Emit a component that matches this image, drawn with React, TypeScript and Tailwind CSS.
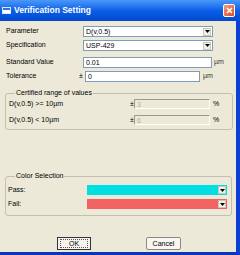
function Arrow() {
  return (
    <div className="w-[8px] h-[8px] mr-[1px] bg-[#f1efe6] border border-[#c9c7ba] flex items-center justify-center">
      <svg width="5" height="3" viewBox="0 0 5 3">
        <path d="M0 0h5L2.5 3z" fill="#000" />
      </svg>
    </div>
  );
}

function Select({ value, w }: { value: string; w: string }) {
  return (
    <div className={`${w} h-[11px] border border-[#7f9db9] bg-white flex items-center`}>
      <span className="pl-[2px] flex-1 leading-none">{value}</span>
      <Arrow />
    </div>
  );
}

function Disabled({ value }: { value: string }) {
  return (
    <div className="w-[76px] h-[10px] border-t border-l border-t-[#9d9b90] border-l-[#9d9b90] border-b border-r border-b-[#fffffb] border-r-[#fffffb] bg-[#ece9d8] flex items-center">
      <span className="pl-[2px] text-[#b5b2a4] leading-none">{value}</span>
    </div>
  );
}

export default function App() {
  return (
    <div className="w-[240px] h-[255px] bg-[#ece9d8] flex flex-col overflow-hidden font-['Liberation_Sans',Arial,sans-serif] text-[7px] text-black">
      {/* Title bar */}
      <div className="h-[21px] shrink-0 flex items-center pl-[2px] pr-[5px] bg-gradient-to-b from-[#4a98f8] via-[#0a5fe8] to-[#0449d0]">
        <div className="w-[9px] h-[7px] bg-white border border-[#dfe8f8] flex flex-col">
          <div className="h-[2px] bg-[#3a6fd8]" />
        </div>
        <span className="ml-[3px] text-white font-bold text-[8.5px] leading-none">Verification Setting</span>
        <div className="ml-auto w-[12px] h-[13px] rounded-[2px] border border-white bg-gradient-to-br from-[#f39a7a] to-[#d8461c] flex items-center justify-center">
          <svg width="7" height="7" viewBox="0 0 7 7">
            <path d="M1 1l5 5M6 1L1 6" stroke="#fff" strokeWidth="1.6" />
          </svg>
        </div>
      </div>

      {/* Body */}
      <div className="flex-1 flex flex-col border-r-[4px] border-r-[#0b3fd6] border-b-[3px] border-b-[#0a36b8]">
        <div className="ml-[6px] mt-[5px] flex items-center h-[11px]">
          <span className="w-[77px]">Parameter</span>
          <Select value="D(v,0.5)" w="w-[130px]" />
        </div>
        <div className="ml-[6px] mt-[3px] flex items-center h-[11px]">
          <span className="w-[77px]">Specification</span>
          <Select value="USP-429" w="w-[130px]" />
        </div>
        <div className="ml-[6px] mt-[6px] flex items-center h-[11px]">
          <span className="w-[77px]">Standard Value</span>
          <div className="w-[129px] h-[11px] border border-[#7f9db9] bg-white flex items-center">
            <span className="pl-[2px] leading-none">0.01</span>
          </div>
          <span className="ml-[2px] text-[#333]">µm</span>
        </div>
        <div className="ml-[6px] mt-[3px] flex items-center h-[11px]">
          <span className="w-[73px]">Tolerance</span>
          <span className="w-[6px]">±</span>
          <div className="w-[115px] h-[11px] border border-[#7f9db9] bg-white flex items-center">
            <span className="pl-[2px] leading-none">0</span>
          </div>
          <span className="ml-[3px] text-[#333]">µm</span>
        </div>

        {/* Certified range */}
        <div className="relative ml-[5px] mt-[11px] w-[228px] h-[37px] border border-[#c3c0b0] rounded-[3px] flex flex-col pl-[3px]">
          <span className="absolute left-[9px] top-[-5px] px-[1px] bg-[#ece9d8] leading-none">Certified range of values</span>
          <div className="mt-[5px] flex items-center h-[10px]">
            <span className="w-[121px]">D(v,0.5) &gt;= 10µm</span>
            <span className="w-[4px]">±</span>
            <Disabled value="3" />
            <span className="ml-[3px]">%</span>
          </div>
          <div className="mt-[6px] flex items-center h-[10px]">
            <span className="w-[121px]">D(v,0.5) &lt; 10µm</span>
            <span className="w-[4px]">±</span>
            <Disabled value="6" />
            <span className="ml-[3px]">%</span>
          </div>
        </div>

        {/* Color selection */}
        <div className="relative ml-[5px] mt-[46px] w-[227px] h-[40px] border border-[#c3c0b0] rounded-[3px] flex flex-col pl-[2px]">
          <span className="absolute left-[9px] top-[-5px] px-[1px] bg-[#ece9d8] leading-none">Color Selection</span>
          <div className="mt-[8px] flex items-center h-[10px]">
            <span className="w-[79px]">Pass:</span>
            <div className="w-[140px] h-[10px] bg-[#00dfe2] flex items-center justify-end">
              <Arrow />
            </div>
          </div>
          <div className="mt-[4px] flex items-center h-[10px]">
            <span className="w-[79px]">Fail:</span>
            <div className="w-[140px] h-[10px] bg-[#f26262] flex items-center justify-end">
              <Arrow />
            </div>
          </div>
        </div>

        {/* Buttons */}
        <div className="mt-[21px] flex">
          <div className="ml-[57px] w-[34px] h-[13px] border border-[#333] bg-[#f4f3ee] flex items-center justify-center">
            <div className="w-[28px] h-[9px] border border-dotted border-[#555] flex items-center justify-center leading-none">OK</div>
          </div>
          <div className="ml-[55px] w-[35px] h-[13px] border border-[#8a8a80] bg-[#f7f6f1] rounded-[2px] flex items-center justify-center leading-none">Cancel</div>
        </div>
      </div>
    </div>
  );
}
